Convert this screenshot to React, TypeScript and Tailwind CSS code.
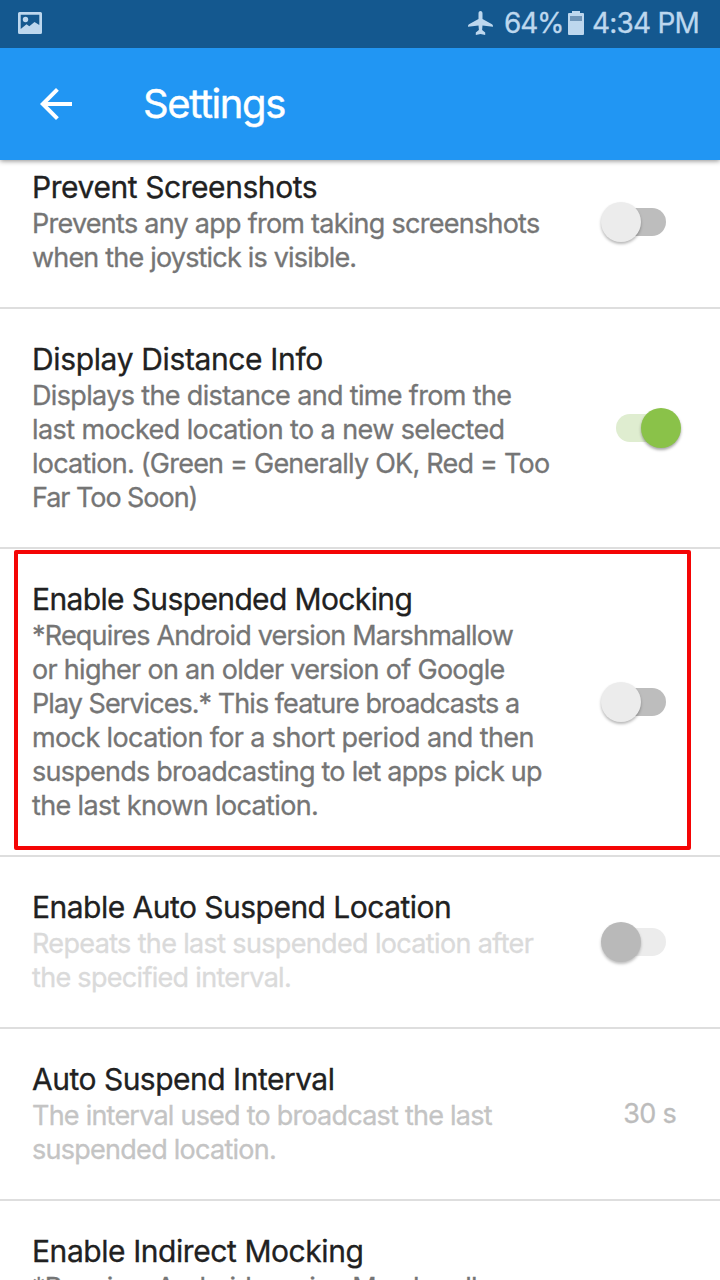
type Line = { text: string; tracking: string };

type SwitchState = "off" | "on" | "disabled";

type Setting = {
  title: Line;
  lines: Line[];
  tone: string;
  toggle?: SwitchState;
  value?: string;
  highlighted?: boolean;
};

const settings: Setting[] = [
  {
    title: { text: "Prevent Screenshots", tracking: "tracking-[-0.43px]" },
    lines: [
      { text: "Prevents any app from taking screenshots", tracking: "tracking-[-0.74px]" },
      { text: "when the joystick is visible.", tracking: "tracking-[-0.81px]" },
    ],
    tone: "text-[#757575]",
    toggle: "off",
  },
  {
    title: { text: "Display Distance Info", tracking: "tracking-[-0.36px]" },
    lines: [
      { text: "Displays the distance and time from the", tracking: "tracking-[-0.65px]" },
      { text: "last mocked location to a new selected", tracking: "tracking-[-0.59px]" },
      { text: "location. (Green = Generally OK, Red = Too", tracking: "tracking-[-0.77px]" },
      { text: "Far Too Soon)", tracking: "tracking-[-1.05px]" },
    ],
    tone: "text-[#757575]",
    toggle: "on",
  },
  {
    title: { text: "Enable Suspended Mocking", tracking: "tracking-[-0.63px]" },
    lines: [
      { text: "*Requires Android version Marshmallow", tracking: "tracking-[-0.81px]" },
      { text: "or higher on an older version of Google", tracking: "tracking-[-0.7px]" },
      { text: "Play Services.* This feature broadcasts a", tracking: "tracking-[-0.95px]" },
      { text: "mock location for a short period and then", tracking: "tracking-[-0.62px]" },
      { text: "suspends broadcasting to let apps pick up", tracking: "tracking-[-0.75px]" },
      { text: "the last known location.", tracking: "tracking-[-0.64px]" },
    ],
    tone: "text-[#757575]",
    toggle: "off",
    highlighted: true,
  },
  {
    title: { text: "Enable Auto Suspend Location", tracking: "tracking-[-0.52px]" },
    lines: [
      { text: "Repeats the last suspended location after", tracking: "tracking-[-0.65px]" },
      { text: "the specified interval.", tracking: "tracking-[-0.69px]" },
    ],
    tone: "text-[#dadada]",
    toggle: "disabled",
  },
  {
    title: { text: "Auto Suspend Interval", tracking: "tracking-[-0.5px]" },
    lines: [
      { text: "The interval used to broadcast the last", tracking: "tracking-[-0.77px]" },
      { text: "suspended location.", tracking: "tracking-[-0.73px]" },
    ],
    tone: "text-[#c4c4c4]",
    value: "30 s",
  },
  {
    title: { text: "Enable Indirect Mocking", tracking: "tracking-[-0.43px]" },
    lines: [{ text: "*Requires Android version Marshmallow", tracking: "tracking-[-0.81px]" }],
    tone: "text-[#757575]",
  },
];

const switchStyles: Record<SwitchState, { box: string; track: string; thumb: string }> = {
  off: {
    box: "mr-[54px] justify-start",
    track: "bg-[#bdbdbd]",
    thumb: "-ml-[5px] bg-[#ececec] shadow-[0_2px_3px_rgba(0,0,0,0.28)]",
  },
  on: {
    box: "mr-[44px] justify-end",
    track: "bg-[#dfedd0]",
    thumb: "-mr-[5px] bg-[#8ac249] shadow-[0_2px_3px_rgba(0,0,0,0.35)]",
  },
  disabled: {
    box: "mr-[54px] justify-start",
    track: "bg-[#ececec]",
    thumb: "-ml-[5px] bg-[#b9b9b9] shadow-[0_2px_3px_rgba(0,0,0,0.25)]",
  },
};

function Switch({ state }: { state: SwitchState }) {
  const s = switchStyles[state];
  return (
    <div className={`flex h-7 w-[60px] shrink-0 items-center rounded-full ${s.box} ${s.track}`}>
      <div className={`size-10 shrink-0 rounded-full ${s.thumb}`} />
    </div>
  );
}

function SettingRow({ setting }: { setting: Setting }) {
  return (
    <div className="relative flex items-center justify-between border-b-2 border-[#dedede] pt-8 pb-8 pl-8">
      <div className="whitespace-nowrap">
        <div className={`h-[38px] text-[30px] leading-9 text-[#212121] ${setting.title.tracking}`}>
          {setting.title.text}
        </div>
        {setting.lines.map((line) => (
          <div key={line.text} className={`text-[27px] leading-[34px] ${setting.tone} ${line.tracking}`}>
            {line.text}
          </div>
        ))}
      </div>
      {setting.toggle && <Switch state={setting.toggle} />}
      {setting.value && (
        <div className="mr-[44px] text-[27px] leading-[34px] tracking-[-0.7px] text-[#bcbcbc]">{setting.value}</div>
      )}
      {setting.highlighted && (
        <div className="absolute top-px left-[14px] h-[300px] w-[677px] rounded-[2px] border-4 border-[#f40505]" />
      )}
    </div>
  );
}

function StatusBar() {
  return (
    <div className="flex h-12 items-center bg-[#14588f] pr-[21px] pb-[2px] pl-[18px] text-[28px] leading-none text-[#bdd7ee]">
      <svg width="24" height="22" viewBox="0 0 24 22" fill="currentColor">
        <path
          fillRule="evenodd"
          d="M1.5 0h21A1.5 1.5 0 0 1 24 1.500v19a1.500 1.500 0 0 1-1.500 1.500h-21A1.500 1.500 0 0 1 0 20.500v-19A1.500 1.500 0 0 1 1.500 0zM2.700 2.700V17L8.500 12.200l2.800 2 5.200-4.200 4.800 3V2.700z"
        />
        <circle cx="7.500" cy="7.500" r="2.700" />
      </svg>
      <div className="grow" />
      <svg width="25" height="24" viewBox="0 0 25 24" fill="currentColor">
        <path d="M12.500 0c-1.300 0-2 1.200-2 2.600V8L1 13.200c-.8.500-1 1-1 2.600l10.500-1.200.4 4.400-3.100 2.600V24l4.700-1 4.700 1v-2.400L14.100 19l.4-4.400L25 15.800c0-1.600-.2-2.100-1-2.600L14.500 8V2.600c0-1.400-.7-2.600-2-2.600z" />
      </svg>
      <span className="ml-[11px] w-[59px] whitespace-nowrap tracking-[-1.2px] [-webkit-text-stroke:0.3px]">64%</span>
      <svg className="ml-[5px]" width="16" height="24" viewBox="0 0 16 24">
        <path fill="currentColor" d="M4 0h8v2h3a1 1 0 0 1 1 1v20a1 1 0 0 1-1 1H1a1 1 0 0 1-1-1V3a1 1 0 0 1 1-1h3z" />
        <path fill="#6f95b8" d="M2 5h12v5H2z" />
      </svg>
      <span className="ml-2 whitespace-nowrap tracking-[-0.8px] [-webkit-text-stroke:0.3px]">4:34 PM</span>
    </div>
  );
}

export default function App() {
  return (
    <div className="flex h-[1280px] w-[720px] flex-col overflow-hidden bg-white font-['Inter',sans-serif]">
      <header className="relative z-10 shrink-0 shadow-[0_1px_5px_rgba(0,0,0,0.45)]">
        <StatusBar />
        <div className="flex h-28 items-center bg-[#2196f3] pl-8 text-white">
          <svg width="48" height="48" viewBox="0 0 24 24" fill="currentColor">
            <path d="M20 11H7.830l5.590-5.590L12 4l-8 8 8 8 1.410-1.410L7.830 13H20v-2z" />
          </svg>
          <h1 className="ml-[63px] text-[40px] leading-none tracking-[-1.4px] [-webkit-text-stroke:0.4px]">Settings</h1>
        </div>
      </header>
      <main className="-mt-[23px] min-h-0 grow overflow-hidden [-webkit-text-stroke:0.3px]">
        {settings.map((setting) => (
          <SettingRow key={setting.title.text} setting={setting} />
        ))}
      </main>
    </div>
  );
}
